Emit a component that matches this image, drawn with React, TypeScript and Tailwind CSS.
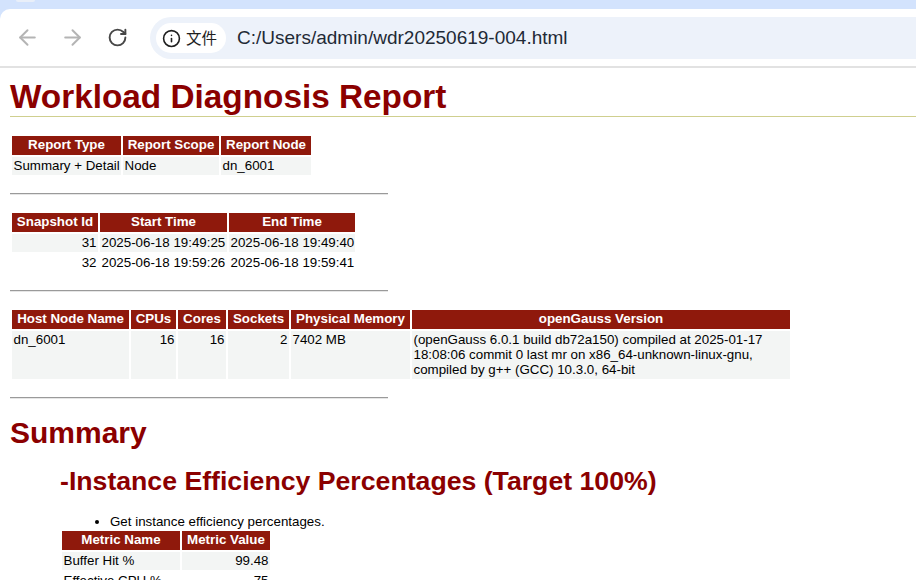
import { ArrowLeft, ArrowRight, RotateCw, Info } from 'lucide-react';

const th = 'bg-[#8f190c] text-white font-bold text-center p-0 whitespace-nowrap leading-[18.5px]';
const tdWrap = 'px-[1.5px] py-[1.5px] align-top leading-[15px]';
const td = `${tdWrap} whitespace-nowrap`;
const tableCls = 'border-separate border-spacing-[2px] text-[13.33px] text-black table-fixed';
const shade = 'bg-[#f3f5f4]';

function Toolbar() {
  return (
    <div className="h-[68px] bg-[#d3e3fd] shrink-0">
      <div className="h-[2px] w-[19px] ml-[16px] mb-[7px] bg-[#e9eff9] rounded-b-[2px]" />
      <div className="h-[59px] bg-white rounded-tl-[10px] border-b-2 border-[#e2e2e2] flex items-start pl-[15px] pt-[8px]">
        <ArrowLeft size={25} strokeWidth={1.9} className="text-[#b4b4b4] mt-[7.5px]" />
        <ArrowRight size={25} strokeWidth={1.9} className="text-[#b4b4b4] ml-[20px] mt-[7.5px]" />
        <RotateCw size={21} strokeWidth={2.2} className="text-[#474747] ml-[22px] mt-[10px]" />
        <div className="ml-[22px] flex-1 h-[42px] bg-[#edf2fa] rounded-l-[21px] flex items-center pl-[6px]">
          <div className="h-[30px] w-[70px] bg-white rounded-[15px] flex items-center pl-[5.5px] gap-[5.5px]">
            <Info size={19} strokeWidth={2} className="text-[#1f1f1f]" />
            <span className="text-[15.5px] text-[#1f1f1f] font-['Noto_Sans_CJK_SC',sans-serif]">文件</span>
          </div>
          <span className="ml-[11px] text-[19px] text-[#1f2a36] font-['Liberation_Sans',sans-serif]">C:/Users/admin/wdr20250619-004.html</span>
        </div>
      </div>
    </div>
  );
}

function Rule() {
  return <hr className="w-[378px] h-[2px] border-0 border-t border-b border-t-[#9a9a9a] border-b-[#e6e6e6]" />;
}

export default function App() {
  return (
    <div className="w-[916px] h-[580px] overflow-hidden bg-white flex flex-col font-['Liberation_Sans',Arial,sans-serif]">
      <Toolbar />
      <main className="pl-[10px] flex-1 overflow-hidden">
        <h1 className="text-[33.33px] font-bold text-[#8b0000] leading-[38px] mt-[10px] border-b border-[#cfcf8f]">Workload Diagnosis Report</h1>

        <table className={`${tableCls} mt-[17px] w-[303px]`}>
          <thead>
            <tr>
              <th className={`${th} w-[109px]`}>Report Type</th>
              <th className={`${th} w-[96px]`}>Report Scope</th>
              <th className={th}>Report Node</th>
            </tr>
          </thead>
          <tbody>
            <tr>
              <td className={`${td} ${shade}`}>Summary + Detail</td>
              <td className={`${td} ${shade}`}>Node</td>
              <td className={`${td} ${shade}`}>dn_6001</td>
            </tr>
          </tbody>
        </table>

        <div className="mt-[16.5px]"><Rule /></div>

        <table className={`${tableCls} mt-[16px] w-[347px]`}>
          <thead>
            <tr>
              <th className={`${th} w-[86px]`}>Snapshot Id</th>
              <th className={`${th} w-[127px]`}>Start Time</th>
              <th className={th}>End Time</th>
            </tr>
          </thead>
          <tbody>
            <tr>
              <td className={`${td} ${shade} text-right`}>31</td>
              <td className={`${td} ${shade}`}>2025-06-18 19:49:25</td>
              <td className={`${td} ${shade}`}>2025-06-18 19:49:40</td>
            </tr>
            <tr>
              <td className={`${td} text-right`}>32</td>
              <td className={td}>2025-06-18 19:59:26</td>
              <td className={td}>2025-06-18 19:59:41</td>
            </tr>
          </tbody>
        </table>

        <div className="mt-[16.5px]"><Rule /></div>

        <table className={`${tableCls} mt-[16px] w-[782px]`}>
          <thead>
            <tr>
              <th className={`${th} w-[117px]`}>Host Node Name</th>
              <th className={`${th} w-[45px]`}>CPUs</th>
              <th className={`${th} w-[48px]`}>Cores</th>
              <th className={`${th} w-[61px]`}>Sockets</th>
              <th className={`${th} w-[119px]`}>Physical Memory</th>
              <th className={th}>openGauss Version</th>
            </tr>
          </thead>
          <tbody>
            <tr>
              <td className={`${td} ${shade}`}>dn_6001</td>
              <td className={`${td} ${shade} text-right`}>16</td>
              <td className={`${td} ${shade} text-right`}>16</td>
              <td className={`${td} ${shade} text-right`}>2</td>
              <td className={`${td} ${shade}`}>7402 MB</td>
              <td className={`${tdWrap} ${shade}`}>(openGauss 6.0.1 build db72a150) compiled at 2025-01-17 18:08:06 commit 0 last mr on x86_64-unknown-linux-gnu, compiled by g++ (GCC) 10.3.0, 64-bit</td>
            </tr>
          </tbody>
        </table>

        <div className="mt-[16.5px]"><Rule /></div>

        <h2 className="text-[30px] font-bold text-[#8b0000] leading-[34px] mt-[17px]">Summary</h2>
        <div className="ml-[50px]">
          <h3 className="text-[26.67px] font-bold text-[#8b0000] leading-[30px] mt-[16px]">-Instance Efficiency Percentages (Target 100%)</h3>
          <ul className="list-disc ml-[50px] mt-[18px] text-[13.33px] text-black leading-[15px]">
            <li>Get instance efficiency percentages.</li>
          </ul>
          <table className={`${tableCls} w-[212px]`}>
            <thead>
              <tr>
                <th className={`${th} w-[118px]`}>Metric Name</th>
                <th className={th}>Metric Value</th>
              </tr>
            </thead>
            <tbody>
              <tr>
                <td className={`${td} ${shade}`}>Buffer Hit %</td>
                <td className={`${td} ${shade} text-right`}>99.48</td>
              </tr>
              <tr>
                <td className={td}>Effective CPU %</td>
                <td className={`${td} text-right`}>75</td>
              </tr>
            </tbody>
          </table>
        </div>
      </main>
    </div>
  );
}
